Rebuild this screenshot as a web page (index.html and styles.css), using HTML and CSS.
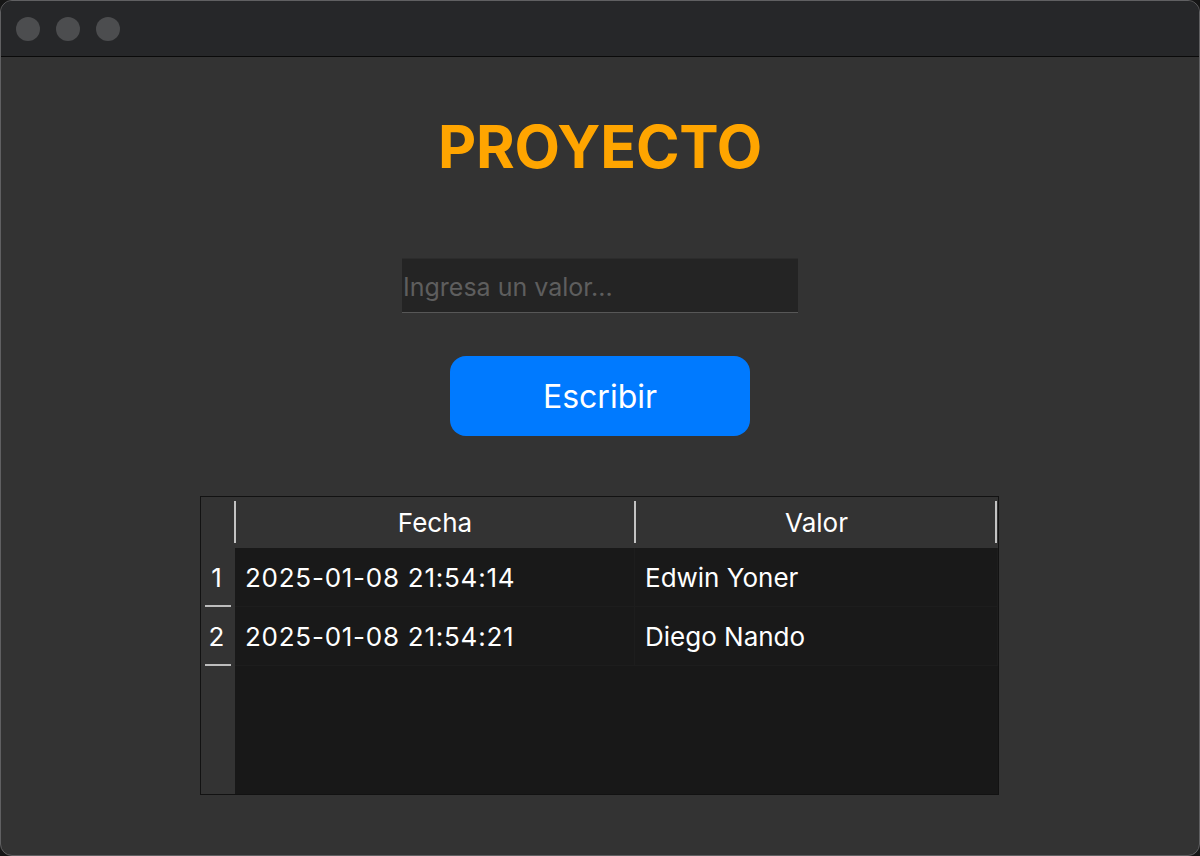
FILE: index.html
```html
<!DOCTYPE html>
<html lang="es">
<head>
<meta charset="utf-8">
<title>PROYECTO</title>
<link rel="stylesheet" href="styles.css">
</head>
<body>
<div class="window">
  <div class="titlebar">
    <span class="light"></span>
    <span class="light"></span>
    <span class="light"></span>
  </div>
  <main class="content">
    <h1 class="title">PROYECTO</h1>
    <input class="field" type="text" placeholder="Ingresa un valor...">
    <button class="btn" type="button">Escribir</button>
    <div class="table">
      <div class="corner"></div>
      <div class="head head-first">Fecha</div>
      <div class="head head-last">Valor</div>

      <div class="rownum"><span>1</span></div>
      <div class="cell cell-date">2025-01-08 21:54:14</div>
      <div class="cell">Edwin Yoner</div>

      <div class="rownum"><span>2</span></div>
      <div class="cell cell-date">2025-01-08 21:54:21</div>
      <div class="cell">Diego Nando</div>

      <div class="rowfill"></div>
      <div class="fill"></div>
    </div>
  </main>
</div>
</body>
</html>
```

FILE: styles.css
```css
* { box-sizing: border-box; }
html, body {
  margin: 0;
  padding: 0;
  background: #161616;
  width: 1200px;
  height: 856px;
  overflow: hidden;
}
body {
  font-family: Inter, "Noto Sans", sans-serif;
}
.window {
  width: 1200px;
  height: 856px;
  border: 1px solid #606062;
  border-radius: 12px;
  overflow: hidden;
  background: #333333;
  display: flex;
  flex-direction: column;
}
.titlebar {
  height: 56px;
  flex: none;
  background: #262729;
  border-bottom: 1px solid #0a0a0a;
  display: flex;
  align-items: center;
  gap: 16px;
  padding-left: 15px;
}
.light {
  width: 24px;
  height: 24px;
  border-radius: 50%;
  background: #4c4d4f;
}
.content {
  flex: 1;
  display: flex;
  flex-direction: column;
  align-items: center;
}
.title {
  margin: 60px 0 0;
  font-size: 59px;
  line-height: 60px;
  font-weight: 700;
  color: #ffa500;
  letter-spacing: -0.2px;
}
.field {
  margin-top: 81px;
  width: 396px;
  height: 55px;
  background: #242424;
  border: none;
  border-top: 1px solid #2c2c2c;
  border-bottom: 1px solid #575757;
  padding: 2px 0 0 1px;
  font-family: Inter, "Noto Sans", sans-serif;
  font-size: 25px;
  color: #dddddd;
  outline: none;
}
.field::placeholder {
  color: #5e5e5e;
}
.btn {
  margin-top: 43px;
  width: 300px;
  height: 80px;
  background: #007aff;
  border: none;
  border-radius: 16px;
  color: #ffffff;
  font-family: Inter, "Noto Sans", sans-serif;
  font-size: 32px;
  font-weight: 400;
}
.table {
  margin-top: 60px;
  margin-left: -1px;
  width: 799px;
  height: 299px;
  border: 1px solid #121212;
  display: grid;
  grid-template-columns: 34px 400px 1fr;
  grid-template-rows: 51px 59px 59px 1fr;
  background: #181818;
  color: #ffffff;
}
.corner {
  background: #333333;
}
.head {
  background: #333333;
  display: flex;
  align-items: center;
  justify-content: center;
  font-size: 26px;
  position: relative;
}
.head::before {
  content: "";
  position: absolute;
  left: -1px;
  top: 4px;
  bottom: 5px;
  width: 2px;
  background: #c2c2c2;
}
.head-last::after {
  content: "";
  position: absolute;
  right: 1px;
  top: 4px;
  bottom: 5px;
  width: 2px;
  background: #c2c2c2;
}
.rownum {
  background: #333333;
  display: flex;
  align-items: center;
  justify-content: flex-start;
  padding: 0 0 0 4px;
  font-size: 26px;
}
.rownum span {
  width: 26px;
  height: 100%;
  display: flex;
  align-items: center;
  justify-content: center;
  border-bottom: 2px solid #bdbdbd;
  padding: 2px 3px 0 0;
}
.cell {
  display: flex;
  align-items: center;
  padding-left: 10px;
  font-size: 26px;
  border-right: 1px solid #1d1d1d;
  border-bottom: 1px solid #1d1d1d;
  background: #191919;
}
.cell-date {
  letter-spacing: 0.75px;
}
.rowfill {
  background: #333333;
}
.fill {
  grid-column: 2 / 4;
  background: #181818;
}
```
